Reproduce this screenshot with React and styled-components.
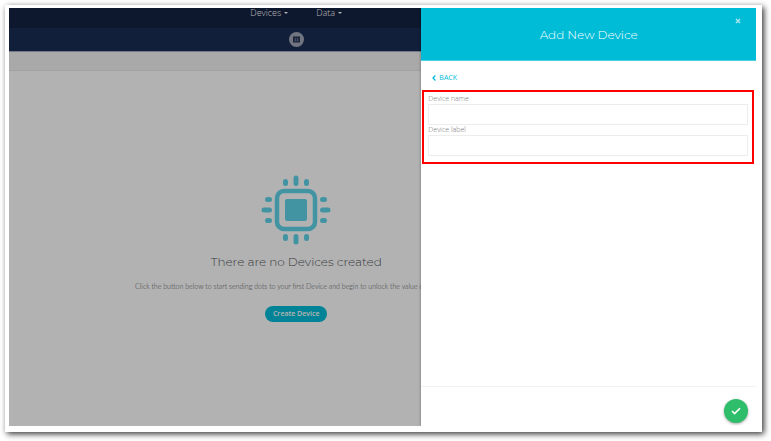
import React from "react";
import styled, { createGlobalStyle } from "styled-components";

const GlobalStyle = createGlobalStyle`
  *, *::before, *::after { box-sizing: border-box; }
  body {
    margin: 0;
    background: #fff;
    font-family: "Open Sans", sans-serif;
    overflow: hidden;
  }
  button, input { font-family: inherit; }
  h1, h2, p { margin: 0; }
`;

const Stage = styled.div`
  display: flex;
  height: 100vh;
  padding: 5px 9px 9px 5px;
`;

const Frame = styled.div`
  flex: 1;
  display: flex;
  padding: 3px 6px 6px 4px;
  background: #fff;
  box-shadow: 2px 2px 6px rgba(0, 0, 0, 0.8);
`;

const Viewport = styled.div`
  flex: 1;
  position: relative;
  overflow: hidden;
  display: flex;
`;

const Page = styled.div`
  flex: 1;
  min-width: 0;
  display: flex;
  flex-direction: column;
  background: #fff;
`;

const Centered = styled.div`
  width: 76.9%;
  display: flex;
  justify-content: center;
  align-items: center;
`;

const NavBar = styled.nav`
  height: 20px;
  background: #132142;
`;

const NavItems = styled(Centered)`
  height: 10px;
  gap: 28px;
`;

const NavButton = styled.button`
  display: flex;
  align-items: center;
  gap: 3px;
  padding: 0;
  border: 0;
  background: none;
  color: #fff;
  font-size: 9px;
  font-weight: 300;
  line-height: 10px;

  &::after {
    content: "";
    border: 2px solid transparent;
    border-top-color: currentColor;
    border-bottom: 0;
  }
`;

const SubBar = styled.div`
  height: 24px;
  background: #1a2d55;
  border-bottom: 1px solid #a4aec3;
`;

const SubItems = styled(Centered)`
  height: 22px;
`;

const RoundButton = styled.button`
  width: 15px;
  height: 15px;
  display: grid;
  place-items: center;
  padding: 0;
  border: 0;
  border-radius: 50%;
  background: #a1a8b8;
`;

const CrumbBar = styled.div`
  height: 19px;
  background: #f2f2f2;
  border-bottom: 1px solid #e7e7e7;
`;

const Empty = styled.main`
  width: 76.9%;
  padding-top: 104px;
  display: flex;
  flex-direction: column;
  align-items: center;
`;

const EmptyTitle = styled.h1`
  margin-top: 8px;
  font-family: Montserrat, Inter, sans-serif;
  font-size: 12px;
  font-weight: 300;
  line-height: 18px;
  color: #50555c;
  white-space: nowrap;
`;

const EmptyText = styled.p`
  margin-top: 10px;
  font-family: Lato, "Open Sans", sans-serif;
  font-size: 7px;
  font-weight: 300;
  line-height: 10px;
  color: #555a62;
  white-space: nowrap;
`;

const CreateButton = styled.button`
  height: 16px;
  margin-top: 15px;
  padding: 0 8px;
  border: 0;
  border-radius: 8px;
  background: #00bcd7;
  color: #fff;
  font-size: 7px;
  font-weight: 600;
  line-height: 16px;
`;

const Backdrop = styled.div`
  position: absolute;
  inset: 0;
  background: rgba(0, 0, 0, 0.3);
`;

const Drawer = styled.aside`
  position: absolute;
  inset: 0 0 0 auto;
  width: 44.8%;
  display: flex;
  flex-direction: column;
  background: #fff;
  box-shadow: 0 0 3px rgba(0, 0, 0, 0.35);
`;

const DrawerHeader = styled.header`
  position: relative;
  height: 53px;
  padding-top: 1px;
  display: grid;
  place-items: center;
  background: #00bcd7;
  border-bottom: 1px solid #4dd0e2;
`;

const DrawerTitle = styled.h2`
  font-family: Montserrat, Inter, sans-serif;
  font-size: 12px;
  font-weight: 300;
  line-height: 18px;
  color: #fff;
`;

const CloseButton = styled.button`
  position: absolute;
  top: 9px;
  right: 14px;
  width: 8px;
  height: 8px;
  display: grid;
  place-items: center;
  padding: 0;
  border: 0;
  background: none;
  color: #a6e6ef;
`;

const BackLink = styled.a`
  align-self: flex-start;
  display: flex;
  align-items: center;
  gap: 3px;
  margin: 12px 0 7px 11px;
  color: #00bcd7;
  font-size: 7px;
  line-height: 10px;
  text-decoration: none;
`;

const Fields = styled.form`
  margin: 0 2px 0 1px;
  padding: 2px 4px 6px;
  border: 2px solid #f00;
`;

const Field = styled.label`
  display: block;
  color: #777;
  font-size: 7px;
  font-weight: 300;
  line-height: 10px;
`;

const TextInput = styled.input`
  display: block;
  width: 100%;
  height: 21px;
  padding: 0 6px;
  border: 1px solid #ededed;
  background: #fff;
  font-size: 8px;
  outline: 0;
`;

const DrawerFooter = styled.footer`
  margin-top: auto;
  height: 40px;
  padding: 8px 8px 0 0;
  display: flex;
  justify-content: flex-end;
  align-items: center;
  border-top: 1px solid #f2f2f2;
`;

const ConfirmButton = styled.button`
  width: 24px;
  height: 24px;
  display: grid;
  place-items: center;
  padding: 0;
  border: 0;
  border-radius: 50%;
  background: #2ebd6b;
  box-shadow: 0 1px 3px rgba(0, 0, 0, 0.35);
`;

const Icon = styled.svg`
  display: block;
  fill: none;
`;

const ChipIcon = () => (
  <Icon width="70" height="70" viewBox="0 0 70 70" aria-hidden="true">
    <rect x="16" y="16" width="38" height="38" rx="7" stroke="#61d5e9" strokeWidth="4.5" />
    <rect x="24" y="24" width="22" height="22" rx="2" fill="#61d5e9" />
    {[0, 90, 180, 270].map((angle) => (
      <path
        key={angle}
        transform={`rotate(${angle} 35 35)`}
        d="M24.5 6.5v2M35 3v5.5M45.5 6.5v2"
        stroke="#61d5e9"
        strokeWidth="5"
        strokeLinecap="round"
      />
    ))}
  </Icon>
);

const TableIcon = () => (
  <Icon width="7" height="7" viewBox="0 0 7 7" aria-hidden="true">
    <rect y="0.5" width="7" height="6" rx="0.5" fill="#1f2f50" />
    <path d="M0.7 3h5.6M0.7 4.7h5.6M2.4 1.5v4.3M4.6 1.5v4.3" stroke="#a1a8b8" strokeWidth="0.35" />
  </Icon>
);

const CloseIcon = () => (
  <Icon width="6" height="6" viewBox="0 0 6 6" aria-hidden="true">
    <path d="M1 1l4 4M5 1L1 5" stroke="currentColor" strokeWidth="1.5" />
  </Icon>
);

const BackIcon = () => (
  <Icon width="4" height="6" viewBox="0 0 4 6" aria-hidden="true">
    <path d="M3.4 0.5L1 3l2.4 2.5" stroke="currentColor" strokeWidth="1.3" />
  </Icon>
);

const CheckIcon = () => (
  <Icon width="10" height="8" viewBox="0 0 10 8" aria-hidden="true">
    <path d="M1 4l2.6 2.6L9 1.2" stroke="#fff" strokeWidth="1.6" />
  </Icon>
);

export default function App() {
  return (
    <>
      <GlobalStyle />
      <Stage>
        <Frame>
          <Viewport>
            <Page>
              <NavBar>
                <NavItems>
                  <NavButton type="button">Devices</NavButton>
                  <NavButton type="button">Data</NavButton>
                </NavItems>
              </NavBar>
              <SubBar>
                <SubItems>
                  <RoundButton type="button" aria-label="Table view">
                    <TableIcon />
                  </RoundButton>
                </SubItems>
              </SubBar>
              <CrumbBar />
              <Empty>
                <ChipIcon />
                <EmptyTitle>There are no Devices created</EmptyTitle>
                <EmptyText>
                  Click the button below to start sending dots to your first Device and begin to
                  unlock the value of your data.
                </EmptyText>
                <CreateButton type="button">Create Device</CreateButton>
              </Empty>
            </Page>
            <Backdrop />
            <Drawer aria-labelledby="drawer-title">
              <DrawerHeader>
                <DrawerTitle id="drawer-title">Add New Device</DrawerTitle>
                <CloseButton type="button" aria-label="Close">
                  <CloseIcon />
                </CloseButton>
              </DrawerHeader>
              <BackLink href="#devices">
                <BackIcon />
                BACK
              </BackLink>
              <Fields id="device-form">
                <Field htmlFor="device-name">Device name</Field>
                <TextInput id="device-name" type="text" />
                <Field htmlFor="device-label">Device label</Field>
                <TextInput id="device-label" type="text" />
              </Fields>
              <DrawerFooter>
                <ConfirmButton type="submit" form="device-form" aria-label="Confirm">
                  <CheckIcon />
                </ConfirmButton>
              </DrawerFooter>
            </Drawer>
          </Viewport>
        </Frame>
      </Stage>
    </>
  );
}
